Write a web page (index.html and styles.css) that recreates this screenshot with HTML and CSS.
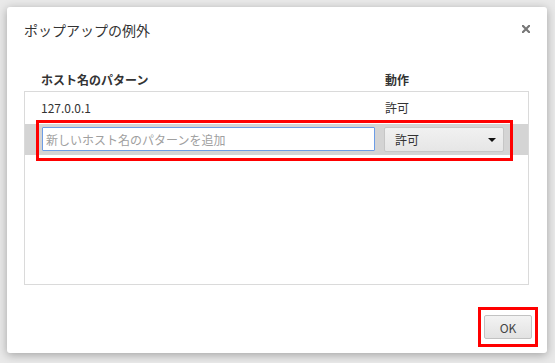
FILE: index.html
```html
<!DOCTYPE html>
<html lang="ja">
<head>
<meta charset="utf-8">
<title>ポップアップの例外</title>
<link rel="stylesheet" href="styles.css">
</head>
<body>
<div class="dialog">
  <div class="title">ポップアップの例外
    <span class="close" aria-label="閉じる">
      <svg width="8" height="8" viewBox="0 0 8 8"><path d="M0.8 0.8 L7.2 7.2 M7.2 0.8 L0.8 7.2" stroke="#777" stroke-width="2.2" stroke-linecap="square"/></svg>
    </span>
  </div>
  <div class="content">
    <div class="cols head">
      <div>ホスト名のパターン</div>
      <div>動作</div>
    </div>
    <div class="list">
      <div class="cols row">
        <div>127.0.0.1</div>
        <div>許可</div>
      </div>
      <div class="row-edit">
        <input class="pattern" type="text" placeholder="新しいホスト名のパターンを追加">
        <div class="select"><span>許可</span><span class="caret"></span></div>
      </div>
    </div>
  </div>
  <div class="footer">
    <button class="ok">OK</button>
  </div>
</div>
<div class="mark mark-row"></div>
<div class="mark mark-ok"></div>
</body>
</html>
```
FILE: styles.css
```css
html, body {
  margin: 0;
  padding: 0;
}
body {
  background: #e9e9e9;
  padding: 7px;
  font-family: "Noto Sans CJK JP", "Noto Sans", sans-serif;
  color: #333;
  width: 555px;
  height: 363px;
  box-sizing: border-box;
  overflow: hidden;
}
.dialog {
  width: 540px;
  height: 346px;
  background: #fff;
  border-radius: 3px;
  box-shadow: 0 2px 10px rgba(0, 0, 0, 0.3);
  display: flex;
  flex-direction: column;
  box-sizing: border-box;
}
.title {
  position: relative;
  padding: 14px 17px 0;
  font-size: 14px;
  line-height: 18px;
  color: #333;
}
.close {
  position: absolute;
  right: 17px;
  top: 18px;
  width: 8px;
  height: 8px;
  display: block;
}
.close svg { display: block; }
.content {
  padding: 0 18px 0 17px;
  margin-top: 31px;
}
.cols {
  display: grid;
  grid-template-columns: 344px 1fr;
  font-size: 12px;
}
.head {
  padding-left: 17px;
  height: 20px;
  line-height: 20px;
  font-weight: bold;
  margin-bottom: 1px;
}
.list {
  border: 1px solid #dadada;
  height: 194px;
  box-sizing: border-box;
}
.row {
  padding-left: 16px;
  height: 32px;
  line-height: 32px;
}
.row-edit {
  height: 31px;
  background: #d4d4d4;
  display: flex;
  align-items: flex-start;
  padding: 3px 0 0 17px;
  box-sizing: border-box;
}
.pattern {
  width: 333px;
  height: 24px;
  box-sizing: border-box;
  margin: 0;
  border: 1px solid #6d9de6;
  border-radius: 1px;
  background: #fff;
  padding: 0 3px;
  font-family: "Noto Sans CJK JP", sans-serif;
  font-size: 12px;
  color: #333;
  outline: none;
}
.pattern::placeholder { color: #a0a0a0; }
.select {
  margin-left: 9px;
  width: 120px;
  height: 25px;
  box-sizing: border-box;
  border: 1px solid #c6c6c6;
  border-radius: 2px;
  background: linear-gradient(#f1f1f1, #e6e6e6);
  display: flex;
  align-items: center;
  justify-content: space-between;
  padding: 0 7px 0 10px;
  font-size: 12px;
  color: #333;
}
.caret {
  width: 0;
  height: 0;
  border-left: 4px solid transparent;
  border-right: 4px solid transparent;
  border-top: 4px solid #111;
  margin-top: 1px;
}
.footer {
  display: flex;
  justify-content: flex-end;
  padding-right: 15px;
  margin-top: 30px;
}
.ok {
  width: 48px;
  height: 24px;
  margin: 0;
  border: 1px solid #c2c2c2;
  border-radius: 2px;
  background: linear-gradient(#f3f3f3, #e2e2e2);
  font-family: "Noto Sans CJK JP", sans-serif;
  font-size: 12px;
  color: #444;
  padding: 0;
}
.mark {
  position: absolute;
  border: 3px solid #ff0000;
  box-sizing: border-box;
}
.mark-row {
  left: 36px;
  top: 120px;
  width: 477px;
  height: 41px;
}
.mark-ok {
  left: 478px;
  top: 307px;
  width: 60px;
  height: 40px;
}
```
